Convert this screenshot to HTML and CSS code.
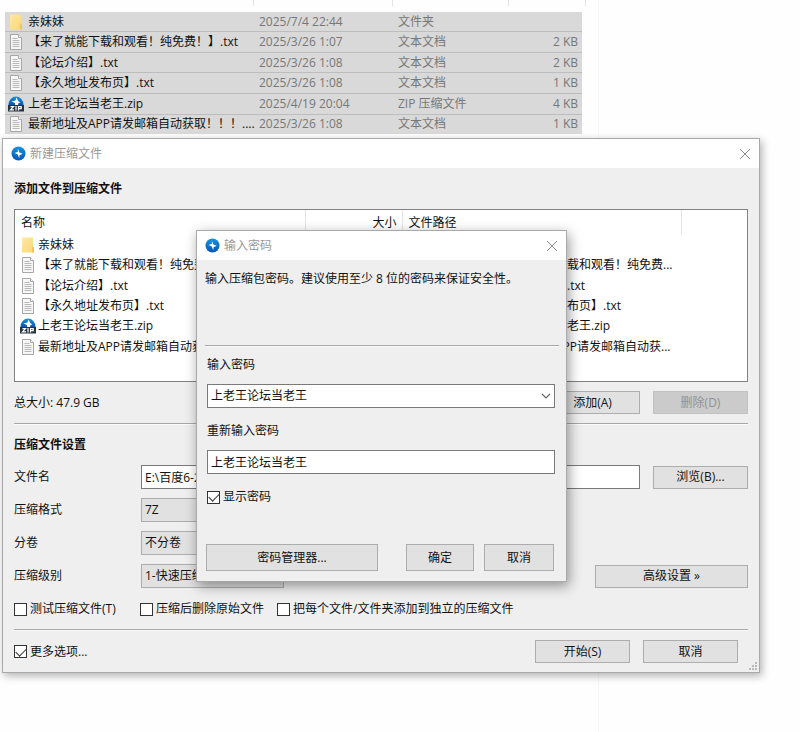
FILE: index.html
```html
<!DOCTYPE html>
<html lang="zh-CN">
<head>
<meta charset="utf-8">
<title>新建压缩文件</title>
<link rel="stylesheet" href="styles.css">
</head>
<body>
<svg class="defs" aria-hidden="true">
  <defs>
    <linearGradient id="blue" x1="0" y1="0" x2="0" y2="1"><stop offset="0" stop-color="#1593dc"/><stop offset="1" stop-color="#0655b5"/></linearGradient>
    <linearGradient id="gold" x1="0" y1="0" x2="1" y2="1"><stop offset="0" stop-color="#ffe9a2"/><stop offset="1" stop-color="#f8d775"/></linearGradient>
  </defs>
  <symbol id="folder" viewBox="0 0 16 16"><path d="M2 .5h11v10l1 1v4H2z" fill="url(#gold)"/><path d="M12.500 9 14 10.500v5h-2v-3z" fill="#edc557"/></symbol>
  <symbol id="doc" viewBox="0 0 16 16"><path d="M2.500.5h8l3 3v12h-11z" fill="#f7f7f7" stroke="#a6a6a6"/><path d="M10.500.5v3h3" fill="#fff" stroke="#a6a6a6"/><path d="M4.500 4.500h5M4.500 6.500h7M4.500 8.500h7M4.500 10.500h7M4.500 12.500h7" stroke="#b8b8b8"/></symbol>
  <symbol id="zip" viewBox="0 0 16 16"><path d="M.5 9a7.500 8.500 0 0 1 15 0z" fill="url(#blue)"/><path d="M8.500 1.500 7.500 4.500 3.500 5.500l3.500 1.500v2h3l.5-2 2-.5-2.300-1.500z" fill="#fff"/><path d="M0 9h16v6.500H0z" fill="#263442"/><path d="M2.500 10.700h3l-3 3.200h3.500M8 10v4.500M10.500 14.500v-3.800h2.700v2h-2.700" fill="none" stroke="#fff" stroke-width="1.200"/></symbol>
  <symbol id="app" viewBox="0 0 16 16"><circle cx="8" cy="8" r="7.500" fill="url(#blue)"/><path d="M7.300 3 7.300 6 3.800 7.400 7.200 9l1.600 4 .3-3.200 3.400-1.600L9 6.800z" fill="#fff"/></symbol>
  <symbol id="close" viewBox="0 0 12 12"><path d="M1 1l10 10M11 1 1 11" stroke="#8c8c8c" fill="none"/></symbol>
</svg>

<main class="explorer">
  <div class="colheads"><i></i><i></i><i></i><i></i></div>
  <table class="files">
    <colgroup><col><col class="c-date"><col class="c-type"><col class="c-size"></colgroup>
    <tbody>
    <tr><td><svg class="ic"><use href="#folder"/></svg>亲妹妹</td><td>2025/7/4 22:44</td><td>文件夹</td><td></td></tr>
    <tr><td><svg class="ic"><use href="#doc"/></svg>【来了就能下载和观看！纯免费！】.txt</td><td>2025/3/26 1:07</td><td>文本文档</td><td>2 KB</td></tr>
    <tr><td><svg class="ic"><use href="#doc"/></svg>【论坛介绍】.txt</td><td>2025/3/26 1:08</td><td>文本文档</td><td>2 KB</td></tr>
    <tr><td><svg class="ic"><use href="#doc"/></svg>【永久地址发布页】.txt</td><td>2025/3/26 1:08</td><td>文本文档</td><td>1 KB</td></tr>
    <tr><td><svg class="ic"><use href="#zip"/></svg>上老王论坛当老王.zip</td><td>2025/4/19 20:04</td><td>ZIP 压缩文件</td><td>4 KB</td></tr>
    <tr><td><svg class="ic"><use href="#doc"/></svg>最新地址及APP请发邮箱自动获取！！！....</td><td>2025/3/26 1:08</td><td>文本文档</td><td>1 KB</td></tr>
    </tbody>
  </table>
</main>

<section class="window archive" aria-label="新建压缩文件">
  <header class="titlebar">
    <svg class="app"><use href="#app"/></svg><span>新建压缩文件</span>
    <button class="x" type="button" aria-label="关闭"><svg><use href="#close"/></svg></button>
  </header>
  <form class="body">
    <h2>添加文件到压缩文件</h2>
    <div class="listbox">
      <table class="list">
        <colgroup><col class="l-name"><col class="l-size"><col class="l-path"><col></colgroup>
        <thead><tr><th>名称</th><th class="right">大小</th><th>文件路径</th><th></th></tr></thead>
        <tbody>
        <tr><td><svg class="ic"><use href="#folder"/></svg>亲妹妹</td><td></td><td><span class="dir">E:\百度6-2\</span>亲妹妹</td><td></td></tr>
        <tr><td><svg class="ic"><use href="#doc"/></svg>【来了就能下载和观看！纯免费！】.txt</td><td></td><td><span class="dir">E:\百度6-2\</span>【来了就能下载和观看！纯免费...</td><td></td></tr>
        <tr><td><svg class="ic"><use href="#doc"/></svg>【论坛介绍】.txt</td><td></td><td><span class="dir">E:\百度6-2\</span>【论坛介绍】.txt</td><td></td></tr>
        <tr><td><svg class="ic"><use href="#doc"/></svg>【永久地址发布页】.txt</td><td></td><td><span class="dir">E:\百度6-2\</span>【永久地址发布页】.txt</td><td></td></tr>
        <tr><td><svg class="ic"><use href="#zip"/></svg>上老王论坛当老王.zip</td><td></td><td><span class="dir">E:\百度6-2\</span>上老王论坛当老王.zip</td><td></td></tr>
        <tr><td><svg class="ic"><use href="#doc"/></svg>最新地址及APP请发邮箱自动获取</td><td></td><td><span class="dir">E:\百度6-2\</span>最新地址及APP请发邮箱自动获...</td><td></td></tr>
        </tbody>
      </table>
    </div>
    <div class="row total">
      <span class="grow">总大小: 47.9 GB</span>
      <button class="btn w95" type="button">添加(A)</button>
      <button class="btn w95" type="button" disabled>删除(D)</button>
    </div>
    <hr>
    <h2 class="second">压缩文件设置</h2>
    <div class="settings">
      <label for="fname">文件名</label>
      <div class="row"><input class="text grow" id="fname" type="text" value="E:\百度6-2"><button class="btn w95" type="button">浏览(B)...</button></div>
      <label for="fmt">压缩格式</label>
      <select class="drop" id="fmt"><option>7Z</option></select>
      <label for="vol">分卷</label>
      <select class="drop" id="vol"><option>不分卷</option></select>
      <label for="level">压缩级别</label>
      <div class="row between"><select class="drop" id="level"><option>1-快速压缩</option></select><button class="btn advanced" type="button">高级设置 »</button></div>
    </div>
    <div class="checks">
      <label class="check"><input type="checkbox"><span>测试压缩文件(T)</span></label>
      <label class="check"><input type="checkbox"><span>压缩后删除原始文件</span></label>
      <label class="check"><input type="checkbox"><span>把每个文件/文件夹添加到独立的压缩文件</span></label>
    </div>
    <hr>
    <div class="row footer">
      <label class="check grow"><input type="checkbox" checked><span>更多选项...</span></label>
      <button class="btn w95" type="button">开始(S)</button>
      <button class="btn w95" type="button">取消</button>
    </div>
  </form>
  <svg class="grip" viewBox="0 0 8 8"><path d="M6 0h2v2H6zM3 3h2v2H3zM6 3h2v2H6zM0 6h2v2H0zM3 6h2v2H3zM6 6h2v2H6z" fill="#bcbcbc"/></svg>

  <section class="window password" role="dialog" aria-label="输入密码">
    <header class="titlebar">
      <svg class="app"><use href="#app"/></svg><span>输入密码</span>
      <button class="x" type="button" aria-label="关闭"><svg><use href="#close"/></svg></button>
    </header>
    <form class="pbody">
      <p>输入压缩包密码。建议使用至少 8 位的密码来保证安全性。</p>
      <hr>
      <div class="fields">
        <label for="pw">输入密码</label>
        <div class="combo">
          <select class="text" id="pw"><option>上老王论坛当老王</option></select>
          <svg viewBox="0 0 10 6"><path d="M1 1l4 4 4-4" fill="none" stroke="#666" stroke-width="1.200"/></svg>
        </div>
        <label for="pw2">重新输入密码</label>
        <input class="text" id="pw2" type="text" value="上老王论坛当老王">
        <label class="check"><input type="checkbox" checked><span>显示密码</span></label>
      </div>
      <div class="actions">
        <button class="btn grow" type="button">密码管理器...</button>
        <button class="btn ok" type="button">确定</button>
        <button class="btn cancel" type="button">取消</button>
      </div>
    </form>
  </section>
</section>
</body>
</html>
```
FILE: styles.css
```css
* { box-sizing: border-box; }

body {
  margin: 0;
  background: #fefefe;
  color: #111;
  font: 12px/16px "Open Sans", "Noto Sans CJK SC", sans-serif;
  white-space: nowrap;
}

button, input, select { font: inherit; color: inherit; margin: 0; }
.defs { position: absolute; width: 0; height: 0; }
.grow { flex: 1; }
.right { text-align: right; }

/* file explorer behind the windows */
.explorer {
  width: 599px;
  max-width: 100%;
  min-height: 100vh;
  padding: 0 16px 0 5px;
  border-right: 1px solid #f7f7f7;
}

.colheads {
  display: grid;
  grid-template-columns: 249px 139px 116px 77px;
  height: 6px;
  margin-bottom: 6px;
}
.colheads i { border-right: 1px solid #e3e3e3; }

table { border-collapse: collapse; table-layout: fixed; width: 100%; }
td, th { padding: 0; font-weight: normal; text-align: left; overflow: hidden; }

.files { height: 122px; background: #d9d9d9; }
.files tr + tr { border-top: 1px solid #bdbdbd; }
.files td { color: #777; }
.files td:first-child { color: #111; padding-left: 3px; }
.files td:last-child { text-align: right; padding-right: 4px; }
.c-date { width: 139px; }
.c-type { width: 116px; }
.c-size { width: 68px; }

.ic { width: 16px; height: 16px; margin-right: 4px; vertical-align: -4px; }

/* windows */
.window {
  position: absolute;
  background: #efefef;
  border: 1px solid #a9a9a9;
  box-shadow: 2px 3px 8px rgba(0, 0, 0, .3);
}
.archive { top: 138px; left: 2px; right: 40px; }
.password { top: 92px; left: 193px; width: 371px; box-shadow: 2px 4px 12px rgba(0, 0, 0, .4); }

.titlebar {
  display: flex;
  align-items: center;
  gap: 4px;
  height: 29px;
  padding: 0 8px;
  background: #fff;
  color: #999;
}
.titlebar .app { width: 15px; height: 15px; }
.x { margin-left: auto; padding: 0; border: 0; background: none; height: 12px; }
.x svg { display: block; width: 12px; height: 12px; }

.body { padding: 13px 11px 9px; }
h2 { margin: 0 0 12px; font-size: 12px; font-weight: 700; line-height: 16px; color: #111; }

.listbox { height: 173px; background: #fff; border: 1px solid #828282; overflow: hidden; }
.list { height: 147px; }
.list th { height: 25px; padding-left: 6px; border-right: 1px solid #e5e5e5; }
.list th.right { text-align: right; padding-right: 5px; }
.list th:last-child { border-right: 0; }
.list td { padding-left: 5px; }
.list td .ic { margin-right: 2px; }
.l-name { width: 290px; }
.l-size { width: 97px; }
.l-path { width: 279px; }
.dir { display: inline-block; width: 88px; }

.row { display: flex; align-items: center; gap: 13px; }
.between { justify-content: space-between; }
.total { margin: 9px 0; }
hr { margin: 0; border: 0; border-top: 1px solid #a8a8a8; border-bottom: 1px solid #fafafa; }
.second { margin: 12px 0; }

.btn {
  height: 23px;
  padding: 0 6px;
  border: 1px solid #adadad;
  background: #e1e1e1;
  text-align: center;
}
.btn:disabled { background: #cbcbcb; border-color: #c2c2c2; color: #929292; }
.w95 { width: 95px; }
.advanced { width: 153px; }

.settings {
  display: grid;
  grid-template-columns: 127px 1fr;
  row-gap: 9px;
  align-items: center;
}
.text {
  height: 24px;
  min-width: 0;
  padding: 0 3px;
  border: 1px solid #7a7a7a;
  border-radius: 0;
  background: #fff;
}
.drop {
  appearance: none;
  width: 143px;
  height: 24px;
  padding: 0 3px;
  border: 1px solid #adadad;
  border-radius: 0;
  background: #e1e1e1;
}

.checks { display: flex; margin: 13px 0 12px; gap: 13px; }
.check { display: flex; align-items: center; gap: 3px; }
.checks .check:first-child { min-width: 113px; }
.check input {
  appearance: none;
  display: grid;
  place-items: center;
  width: 13px;
  height: 13px;
  border: 1px solid #333;
  background: #fff;
}
.check input:checked::before {
  content: "";
  width: 9px;
  height: 5px;
  border: solid #333;
  border-width: 0 0 1px 1px;
  transform: translateY(-1px) rotate(-45deg);
}
.footer { padding: 9px 10px 0 0; }
.grip { position: absolute; right: 2px; bottom: 2px; width: 8px; height: 8px; }

/* password window */
.password { top: 91px; }
.pbody { padding: 11px 7px 10px 8px; }
.pbody p { margin: 0 0 58px; }
.fields { display: grid; padding: 10px 4px 0 2px; }
.fields > label { margin-bottom: 11px; }
.combo { display: grid; position: relative; margin-bottom: 15px; }
.combo select { appearance: none; }
.combo svg { position: absolute; right: 4px; top: 9px; width: 10px; height: 6px; }
.fields .check { margin: 15px 0 39px; }
.actions { display: flex; padding: 0 5px 0 1px; }
.actions .btn { height: 27px; }
.ok { width: 68px; margin: 0 10px 0 28px; }
.cancel { width: 70px; }
```
